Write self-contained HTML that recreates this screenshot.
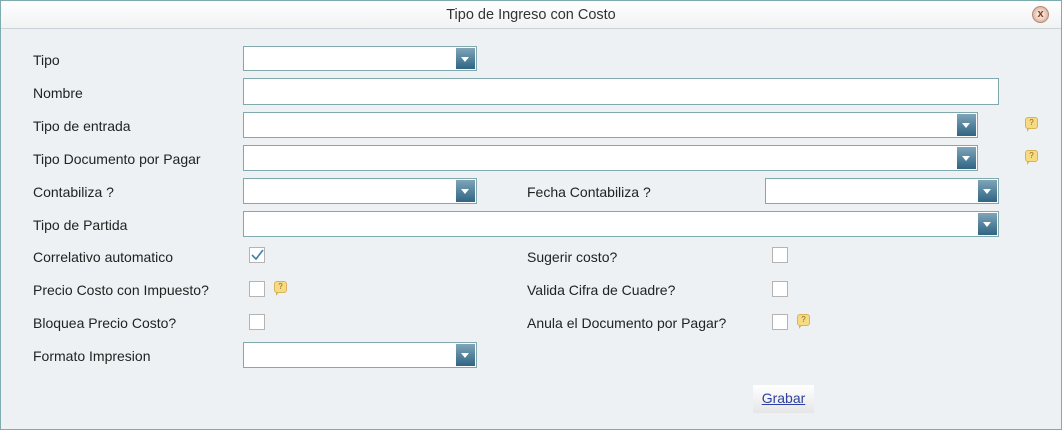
<!DOCTYPE html>
<html><head><style>
*{box-sizing:border-box;margin:0;padding:0}
body{width:1062px;height:430px;overflow:hidden;background:#fff;font-family:"Liberation Sans",sans-serif;}
.win{position:absolute;left:0;top:0;width:1062px;height:430px;border:1px solid #7eacae;background:#edf1f4}
.title{position:absolute;left:0;top:0;width:1060px;height:28px;background:linear-gradient(#fff,#f0f2f3);border-bottom:1px solid #ccd2d6;text-align:center;font-size:14.5px;line-height:29px;color:#333}
.close{position:absolute;left:1031px;top:5px;width:17px;height:17px;border-radius:50%;background:radial-gradient(circle,#f5e2d6 30%,#c89a84 100%);border:1px solid #b98a76;color:#8a3a20;font-size:11px;line-height:14px;text-align:center;font-weight:bold}
.l{position:absolute;font-size:14px;color:#222}
.in{position:absolute;background:#fff;border:1px solid #7fa9ad}
.dd{position:absolute;right:1px;top:1px;bottom:1px;width:19px;background:linear-gradient(#7fa4b8,#2f6583)}
.dd:after{content:"";position:absolute;left:5px;top:9px;border-left:4px solid transparent;border-right:4px solid transparent;border-top:5px solid #fff}
.cb{position:absolute;width:16px;height:16px;border:1px solid #b4b4b4;background:#fff}
.h{position:absolute;width:13px;height:12px;background:#f6db82;border:1px solid #d9b35c;border-radius:3px;font-size:8px;line-height:10px;text-align:center;color:#8a6a20}
.h:after{content:"";position:absolute;left:1px;top:10px;border-top:4px solid #d9b35c;border-right:3px solid transparent}
.btn{position:absolute;left:752px;top:384px;width:61px;height:28px;background:linear-gradient(#fff,#e6e6e6);font-size:14px;line-height:27px;text-align:center;color:#2d3fa0;text-decoration:underline}
</style></head><body>
<div class="win">
<div class="title">Tipo de Ingreso con Costo</div>
<div class="close">x</div>

<div class="l" style="left:32px;top:51px">Tipo</div>
<div class="in" style="left:242px;top:45px;width:234px;height:25px"><div class="dd"></div></div>

<div class="l" style="left:32px;top:84px">Nombre</div>
<div class="in" style="left:242px;top:77px;width:756px;height:27px"></div>

<div class="l" style="left:32px;top:117px">Tipo de entrada</div>
<div class="in" style="left:242px;top:111px;width:735px;height:26px"><div class="dd"></div></div>
<div class="h" style="left:1024px;top:116px">?</div>

<div class="l" style="left:32px;top:150px">Tipo Documento por Pagar</div>
<div class="in" style="left:242px;top:144px;width:735px;height:26px"><div class="dd"></div></div>
<div class="h" style="left:1024px;top:149px">?</div>

<div class="l" style="left:32px;top:183px">Contabiliza ?</div>
<div class="in" style="left:242px;top:177px;width:234px;height:26px"><div class="dd"></div></div>
<div class="l" style="left:526px;top:183px">Fecha Contabiliza ?</div>
<div class="in" style="left:764px;top:177px;width:234px;height:26px"><div class="dd"></div></div>

<div class="l" style="left:32px;top:216px">Tipo de Partida</div>
<div class="in" style="left:242px;top:210px;width:756px;height:26px"><div class="dd"></div></div>

<div class="l" style="left:32px;top:248px">Correlativo automatico</div>
<div class="cb" style="left:248px;top:246px"><svg width="14" height="14" style="position:absolute;left:0;top:0"><path d="M2 7 L6 11 L13 2" stroke="#3f7fa8" stroke-width="1.6" fill="none"/></svg></div>
<div class="l" style="left:526px;top:248px">Sugerir costo?</div>
<div class="cb" style="left:771px;top:246px"></div>

<div class="l" style="left:32px;top:281px">Precio Costo con Impuesto?</div>
<div class="cb" style="left:248px;top:280px"></div>
<div class="h" style="left:273px;top:280px">?</div>
<div class="l" style="left:526px;top:281px">Valida Cifra de Cuadre?</div>
<div class="cb" style="left:771px;top:280px"></div>

<div class="l" style="left:32px;top:314px">Bloquea Precio Costo?</div>
<div class="cb" style="left:248px;top:313px"></div>
<div class="l" style="left:526px;top:314px">Anula el Documento por Pagar?</div>
<div class="cb" style="left:771px;top:313px"></div>
<div class="h" style="left:796px;top:313px">?</div>

<div class="l" style="left:32px;top:347px">Formato Impresion</div>
<div class="in" style="left:242px;top:341px;width:234px;height:26px"><div class="dd"></div></div>

<div class="btn">Grabar</div>
</div>
</body></html>
